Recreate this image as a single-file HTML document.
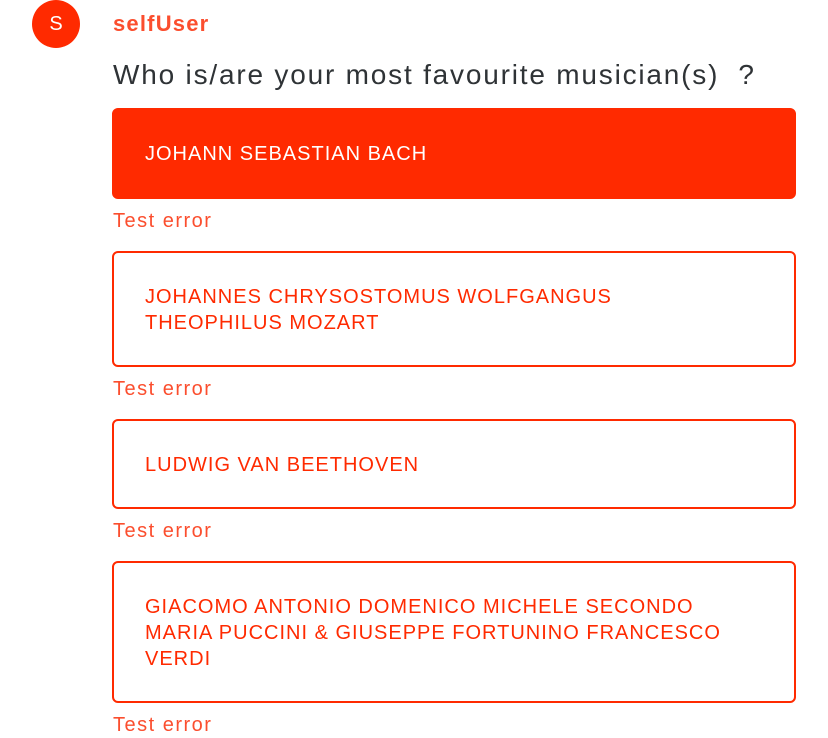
<!DOCTYPE html>
<html><head><meta charset="utf-8"><style>
html,body{margin:0;padding:0;background:#fff;width:828px;height:738px;overflow:hidden;font-family:"Liberation Sans",sans-serif;}
.av{position:absolute;left:32px;top:0;width:48px;height:48px;border-radius:50%;background:#ff2a00;color:#fff;font-size:20px;line-height:48px;text-align:center;}
.name{position:absolute;left:113px;top:10px;font-size:22px;font-weight:bold;color:#fb4e2e;line-height:28px;letter-spacing:1.2px;}
.q{position:absolute;left:113px;top:58px;font-size:28px;color:#2f3336;line-height:34px;letter-spacing:1.8px;}
.opt{position:absolute;left:112px;width:684px;box-sizing:border-box;border:2px solid #ff2a00;border-radius:6px;padding:31px 31px 29px;font-size:20px;line-height:26px;color:#ff2a00;letter-spacing:1px;}
.opt.sel{background:#ff2a00;color:#fff;}
.err{position:absolute;left:113px;font-size:20px;color:#fb4e2e;line-height:26px;letter-spacing:1.5px;top:0;}
</style></head><body>
<div class="av">S</div>
<div class="name">selfUser</div>
<div class="q">Who is/are your most favourite musician(s)&nbsp; ?</div>
<div class="opt sel" style="top:108px;height:91px">JOHANN SEBASTIAN BACH</div>
<div class="err" style="top:208px">Test error</div>
<div class="opt" style="top:251px;height:116px">JOHANNES CHRYSOSTOMUS WOLFGANGUS<br>THEOPHILUS MOZART</div>
<div class="err" style="top:376px">Test error</div>
<div class="opt" style="top:419px;height:90px">LUDWIG VAN BEETHOVEN</div>
<div class="err" style="top:518px">Test error</div>
<div class="opt" style="top:561px;height:142px">GIACOMO ANTONIO DOMENICO MICHELE SECONDO<br>MARIA PUCCINI &amp; GIUSEPPE FORTUNINO FRANCESCO<br>VERDI</div>
<div class="err" style="top:712px">Test error</div>
</body></html>
